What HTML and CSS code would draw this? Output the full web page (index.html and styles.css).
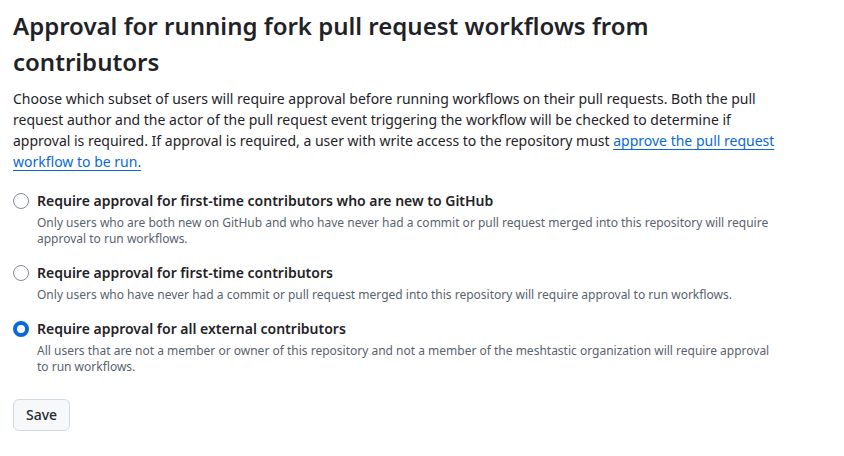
FILE: index.html
```html
<!DOCTYPE html>
<html lang="en">
<head>
    <meta charset="UTF-8">
    <meta name="viewport" content="width=device-width, initial-scale=1.0">
    <title>Fork pull request workflows</title>
    <link rel="stylesheet" href="styles.css">
</head>
<body>
    <div class="container">
        <h2 class="subhead-heading">Approval for running fork pull request workflows from contributors</h2>
        <p class="subhead-description">
            Choose which subset of users will require approval before running workflows on their pull requests. Both the pull request author and the actor of the pull request event triggering the workflow will be checked to determine if approval is required. If approval is required, a user with write access to the repository must <a href="#">approve the pull request workflow to be run.</a>
        </p>

        <form class="approval-form">
            <div class="option">
                <input type="radio" name="approval" id="new-to-github">
                <div class="option-body">
                    <label for="new-to-github">Require approval for first-time contributors who are new to GitHub</label>
                    <p class="note">Only users who are both new on GitHub and who have never had a commit or pull request merged into this repository will require approval to run workflows.</p>
                </div>
            </div>

            <div class="option">
                <input type="radio" name="approval" id="first-time">
                <div class="option-body">
                    <label for="first-time">Require approval for first-time contributors</label>
                    <p class="note">Only users who have never had a commit or pull request merged into this repository will require approval to run workflows.</p>
                </div>
            </div>

            <div class="option">
                <input type="radio" name="approval" id="all-external" checked>
                <div class="option-body">
                    <label for="all-external">Require approval for all external contributors</label>
                    <p class="note">All users that are not a member or owner of this repository and not a member of the meshtastic organization will require approval to run workflows.</p>
                </div>
            </div>

            <button type="submit" class="btn">Save</button>
        </form>
    </div>
</body>
</html>
```

FILE: styles.css
```css
/* General Page Styling */
body {
    margin: 0;
    padding: 0;
    background-color: #ffffff;
    color: #1f2328;
    font-family: "Noto Sans", "Liberation Sans", sans-serif;
}

.container {
    width: 770px;
    padding: 8px 13px;
}

/* Header */
.subhead-heading {
    margin: 0;
    font-size: 24px;
    font-weight: 600;
    line-height: 36px;
}

.subhead-description {
    margin: 8px 0 0 0;
    font-size: 14px;
    line-height: 21px;
}

.subhead-description a {
    color: #0969da;
    text-decoration: underline;
    text-underline-offset: 3px;
}

/* Radio options */
.approval-form {
    display: flex;
    flex-direction: column;
    align-items: flex-start;
    gap: 16px;
    margin-top: 19px;
}

.option {
    display: flex;
    gap: 8px;
}

.option input[type="radio"] {
    appearance: none;
    flex-shrink: 0;
    width: 16px;
    height: 16px;
    margin: 2px 0 0 0;
    border: 1px solid #818b98;
    border-radius: 50%;
    background: #ffffff;
}

.option input[type="radio"]:checked {
    border: 4px solid #0969da;
}

.option-body label {
    display: block;
    font-size: 14px;
    font-weight: 600;
    line-height: 20px;
}

.note {
    margin: 4px 0 0 0;
    font-size: 12px;
    line-height: 16px;
    color: #59636e;
}

/* Button */
.btn {
    margin-top: 8px;
    height: 32px;
    padding: 0 12px;
    background: #f6f8fa;
    color: #25292e;
    border: 1px solid #d1d9e0;
    border-radius: 6px;
    font-family: inherit;
    font-size: 14px;
    font-weight: 500;
    line-height: 20px;
    cursor: pointer;
}

.btn:hover {
    background: #eff2f5;
}
```
